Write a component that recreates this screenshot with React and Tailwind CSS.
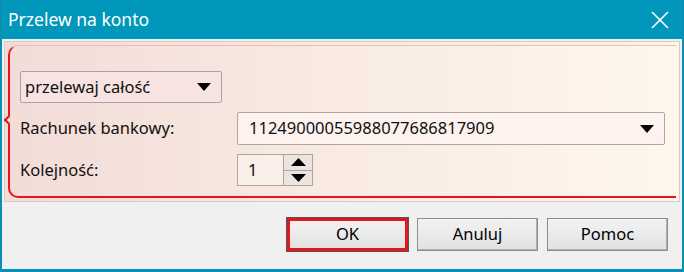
import React from "react";

const font = { fontFamily: '"Segoe UI", "Noto Sans", "Open Sans", sans-serif' };

const Caret = () => (
  <svg width="14" height="8" viewBox="0 0 14 8" className="shrink-0">
    <path d="M0 0 L14 0 L7 8 Z" fill="#000" />
  </svg>
);

const Button = ({ children, focused }) => (
  <div
    className={
      "w-[121px] h-[33px] flex items-center justify-center text-[16.5px] text-black bg-gradient-to-b from-[#f2f2f2] to-[#e2e2e2] " +
      (focused
        ? "border-[3px] border-[#e0191c] outline outline-1 outline-[#555]"
        : "border border-[#8e8e8e] shadow-[inset_-1px_-1px_0_#b0b0b0]")
    }
  >
    {children}
  </div>
);

export default function App() {
  return (
    <div
      className="w-[684px] h-[272px] flex flex-col bg-[#0097bb] border-x-2 border-b-[3px] border-[#0a8fb4]"
      style={font}
    >
      {/* Title bar */}
      <div className="h-[39px] flex items-center justify-between pl-[6px] pr-[13px] text-white text-[17.5px]">
        <span>Przelew na konto</span>
        <svg width="18" height="18" viewBox="0 0 18 18">
          <path d="M1 1 L17 17 M17 1 L1 17" stroke="#fff" strokeWidth="1.6" />
        </svg>
      </div>

      {/* Body */}
      <div className="flex-1 flex flex-col bg-[#f0f0f0] border-t border-[#e8eef0]">
        {/* Options panel */}
        <div className="mx-[2px] mt-[1px] h-[161px] p-[3px] border border-[#d2cbc8] bg-gradient-to-r from-[#f2dcd8] via-[#f9ebe2] to-[#fff7ec]">
          <div className="relative h-full rounded-l-[10px] border-l-2 border-b-2 border-t border-[#e8141b] border-t-[#f3b9b3] pl-[10px] pr-[10px] pt-[25px] flex flex-col gap-[9px]">
            {/* brace notch */}
            <div className="absolute left-[-5px] top-[71px] w-[6px] h-[6px] border-l-2 border-b-2 border-[#e8141b] rotate-45 bg-[#f2dcd8]" />

            <div className="w-[202px] h-[32px] flex items-center justify-between pl-[4px] pr-[10px] border border-[#a9a2a0] rounded-[2px] bg-[#f7e4e2] text-[16.5px] text-[#111]">
              <span>przelewaj całość</span>
              <Caret />
            </div>

            <div className="flex items-center h-[33px]">
              <span className="w-[217px] text-[16.5px] text-[#111]">Rachunek bankowy:</span>
              <div className="w-[428px] h-[33px] flex items-center justify-between pl-[11px] pr-[10px] border border-[#aca6a2] rounded-[2px] bg-[#fdf2ee] text-[16.5px] text-[#111]">
                <span>11249000055988077686817909</span>
                <Caret />
              </div>
            </div>

            <div className="flex items-center h-[32px]">
              <span className="w-[217px] text-[16.5px] text-[#111]">Kolejność:</span>
              <div className="flex h-[32px] border border-[#aca6a2] bg-[#fbefe9]">
                <div className="w-[46px] flex items-center pl-[10px] text-[16.5px] text-[#111] border-r border-[#aca6a2]">
                  1
                </div>
                <div className="w-[28px] flex flex-col bg-[#ece4df]">
                  <div className="flex-1 flex items-center justify-center border-b border-[#aca6a2]">
                    <svg width="15" height="8" viewBox="0 0 15 8">
                      <path d="M0 8 L15 8 L7.5 0 Z" fill="#000" />
                    </svg>
                  </div>
                  <div className="flex-1 flex items-center justify-center">
                    <svg width="15" height="8" viewBox="0 0 15 8">
                      <path d="M0 0 L15 0 L7.5 8 Z" fill="#000" />
                    </svg>
                  </div>
                </div>
              </div>
            </div>
          </div>
        </div>

        {/* Buttons */}
        <div className="flex justify-end gap-[9px] pr-[14px] pt-[16px]">
          <Button focused>OK</Button>
          <Button>Anuluj</Button>
          <Button>Pomoc</Button>
        </div>
      </div>
    </div>
  );
}
